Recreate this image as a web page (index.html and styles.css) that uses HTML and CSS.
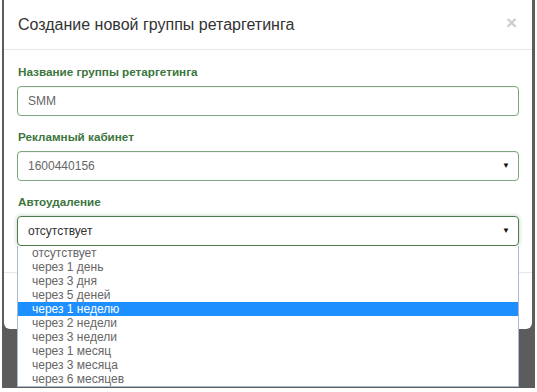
FILE: index.html
```html
<!DOCTYPE html>
<html lang="ru">
<head>
  <meta charset="UTF-8">
  <title>Создание новой группы ретаргетинга</title>
  <meta name="viewport" content="width=device-width, initial-scale=1.0">
  <link rel="stylesheet" href="styles.css">
</head>
<body>
<div class="backdrop">

  <!-- Модальное окно -->
  <div class="modal">
    <div class="modal-header">
      <h4 class="modal-title">Создание новой группы ретаргетинга</h4>
      <span class="close">&times;</span>
    </div>

    <div class="modal-body">
      <div class="form-group">
        <label>Название группы ретаргетинга</label>
        <div class="form-control">SMM</div>
      </div>

      <div class="form-group">
        <label>Рекламный кабинет</label>
        <div class="form-control select">
          <span>1600440156</span>
          <span class="arrow">&#9660;</span>
        </div>
      </div>

      <div class="form-group last">
        <label>Автоудаление</label>
        <div class="select-wrap">
          <div class="form-control select focus">
            <span>отсутствует</span>
            <span class="arrow">&#9660;</span>
          </div>
          <!-- Открытый список -->
          <ul class="dropdown">
            <li>отсутствует</li>
            <li>через 1 день</li>
            <li>через 3 дня</li>
            <li>через 5 деней</li>
            <li class="active">через 1 неделю</li>
            <li>через 2 недели</li>
            <li>через 3 недели</li>
            <li>через 1 месяц</li>
            <li>через 3 месяца</li>
            <li>через 6 месяцев</li>
          </ul>
        </div>
      </div>
    </div>

    <div class="modal-footer"></div>
  </div>

</div>
</body>
</html>
```

FILE: styles.css
```css
body {
  margin: 0;
  background: #fff;
  font-family: "Liberation Sans", Arial, sans-serif;
}

.backdrop {
  width: 533px;
  height: 388px;
  margin-left: 2px;
  background: #5c5c5c;
}

.modal {
  margin: 0 3px 0 2px;
  height: 329px;
  background: #fff;
  border-radius: 0 0 6px 6px;
  display: flex;
  flex-direction: column;
}

.modal-header {
  height: 49px;
  border-bottom: 1px solid #e8e8e8;
  display: flex;
  align-items: center;
  justify-content: space-between;
  padding: 0 14px 0 14px;
}

.modal-title {
  margin: 0;
  font-size: 16px;
  font-weight: normal;
  color: #333;
}

.close {
  font-size: 19px;
  font-weight: bold;
  color: #cdcdcd;
  margin-top: -4px;
  margin-right: 1px;
}

.modal-body {
  padding: 13px 13px 0 13px;
  height: 209px;
}

.form-group {
  margin-bottom: 12px;
}

.form-group label {
  display: block;
  font-size: 11.7px;
  font-weight: bold;
  line-height: 18px;
  margin-bottom: 5px;
  padding-left: 1px;
  color: #3c763d;
}

.form-control {
  height: 30px;
  box-sizing: border-box;
  border: 1px solid #7fa77e;
  border-radius: 4px;
  padding: 0 10px;
  font-size: 12px;
  line-height: 28px;
  color: #666;
  box-shadow: inset 0 1px 1px rgba(0,0,0,0.05);
}

.select {
  display: flex;
  justify-content: space-between;
  align-items: center;
}

.select .arrow {
  font-size: 8px;
  color: #111;
  margin-right: -2px;
}

.focus {
  border-color: #4f7a4e;
  color: #333;
  box-shadow: 0 0 4px rgba(60,118,61,0.35);
}

.select-wrap {
  position: relative;
}

.dropdown {
  position: absolute;
  top: 100%;
  left: 0;
  right: 0;
  margin: 0;
  padding: 0;
  list-style: none;
  background: #fff;
  border: 1px solid #a9bacb;
  border-top: none;
  z-index: 10;
}

.dropdown li {
  height: 14px;
  line-height: 14px;
  font-size: 12px;
  padding-left: 14px;
  color: #666;
}

.dropdown li.active {
  background: #1e8fff;
  color: #fff;
}

.modal-footer {
  flex: 1;
  border-top: 1px solid #e8e8e8;
}
```
